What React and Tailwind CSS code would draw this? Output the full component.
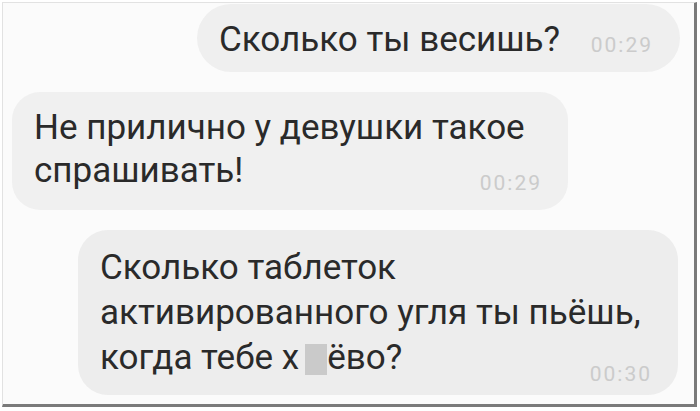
import React from 'react';

const font = { fontFamily: '"Roboto", "Liberation Sans", sans-serif' };

const Time = ({ children, className = '' }) => (
  <span className={`text-[21px] leading-none text-[#cbcbcb] tracking-[2px] ${className}`}>{children}</span>
);

export default function App() {
  return (
    <div className="w-[700px] h-[411px] bg-white p-[2px]" style={font}>
      <div className="h-[405px] w-[695px] border-t border-l border-[#e2e2e2] border-r-[3px] border-b-[3px] border-r-[#7a7a7a] border-b-[#7a7a7a] bg-[#fbfbfb] flex flex-col pt-[1px]">
        {/* outgoing */}
        <div className="self-end mr-[14px] w-[483px] h-[68px] rounded-[34px] bg-[#efefef] flex items-center pl-[22px] pr-[27px] pt-[3px]">
          <span className="text-[35px] text-[#2a2a2a] leading-none whitespace-nowrap">Сколько ты весишь?</span>
          <Time className="ml-auto mt-[12px]">00:29</Time>
        </div>

        {/* incoming */}
        <div className="mt-[20px] ml-[9px] w-[556px] h-[118px] rounded-[28px] bg-[#f0f0f0] flex flex-col pl-[22px] pr-[26px] pt-[14px] text-[35px] text-[#2a2a2a] leading-[43px] whitespace-nowrap">
          <div>Не прилично у девушки такое</div>
          <div className="flex items-end justify-between">
            <span>спрашивать!</span>
            <Time className="-mb-[2px]">00:29</Time>
          </div>
        </div>

        {/* outgoing */}
        <div className="mt-[20px] ml-[75px] w-[600px] h-[165px] rounded-[30px] bg-[#ededed] flex flex-col pl-[22px] pr-[26px] pt-[15px] text-[35px] text-[#2a2a2a] leading-[45px] whitespace-nowrap">
          <div>Сколько таблеток</div>
          <div>активированного угля ты пьёшь,</div>
          <div className="flex items-end justify-between">
            <span>
              когда тебе х<span className="inline-block w-[22px] h-[31px] bg-[#cacaca] align-[-6px] ml-[6px]"></span>ёво?
            </span>
            <Time className="-mb-[5px]">00:30</Time>
          </div>
        </div>
      </div>
    </div>
  );
}
